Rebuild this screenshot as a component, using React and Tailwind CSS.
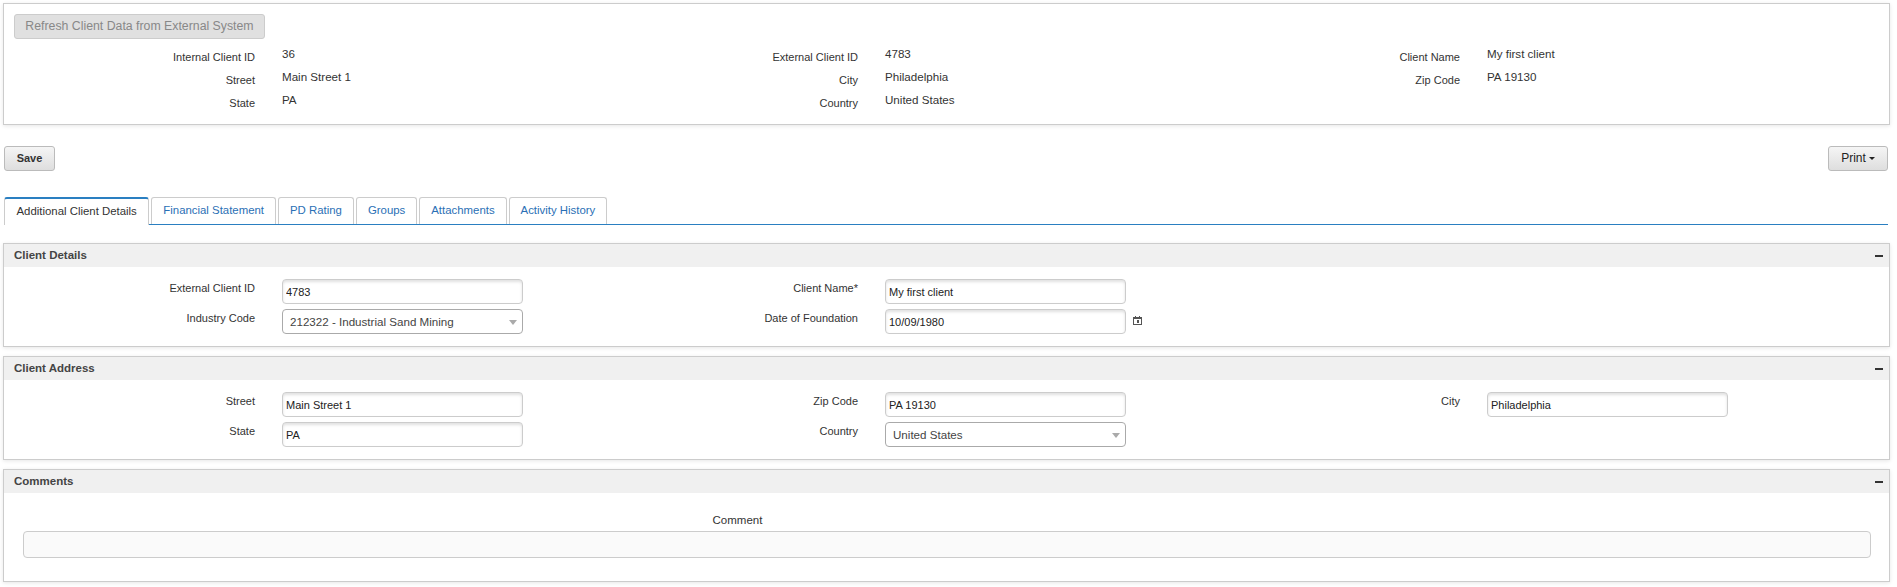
import React from "react";

const topRows = [
  [["Internal Client ID", "36"], ["External Client ID", "4783"], ["Client Name", "My first client"]],
  [["Street", "Main Street 1"], ["City", "Philadelphia"], ["Zip Code", "PA 19130"]],
  [["State", "PA"], ["Country", "United States"]],
];

const tabs = ["Financial Statement", "PD Rating", "Groups", "Attachments", "Activity History"];

const TextField = ({ value }) => (
  <input
    readOnly
    value={value}
    className="w-[241px] h-[25px] bg-white border border-[#ccc] rounded-[4px] pl-[3px] text-[11px] text-[#222] shadow-[inset_0_2px_3px_rgba(0,0,0,0.12)] outline-none"
  />
);

const SelectField = ({ value }) => (
  <div className="relative w-[241px] h-[25px] bg-white border border-[#aaa] rounded-[4px] pl-[7px] flex items-center text-[11.6px] text-[#444]">
    {value}
    <span className="absolute right-[5px] top-[10px] w-0 h-0 border-x-[4px] border-x-transparent border-t-[5px] border-t-[#aaa]" />
  </div>
);

const CalendarIcon = () => (
  <svg width="9" height="9" viewBox="0 0 9 9" className="ml-[7px] -mt-[2px]">
    <rect x="0.5" y="1.5" width="8" height="7" fill="none" stroke="#555" />
    <rect x="0" y="1" width="9" height="2" fill="#555" />
    <rect x="2" y="0" width="1" height="2" fill="#555" />
    <rect x="6" y="0" width="1" height="2" fill="#555" />
    <rect x="4" y="4" width="2" height="3" fill="#555" />
  </svg>
);

const FormCell = ({ label, children }) => (
  <div className="flex items-start">
    <label className="w-[251px] text-right pt-[2px] text-[11px] leading-[14px] text-[#333]">{label}</label>
    <div className="ml-[27px] flex items-center">{children}</div>
  </div>
);

const Section = ({ title, className, children }) => (
  <section className={`mx-[3px] w-[1887px] border border-[#ccc] shadow-[0_1px_4px_rgba(0,0,0,0.1)] ${className}`}>
    <div className="h-[23px] bg-[#f0f0f0] flex items-center justify-between pl-[10px] pr-[6px] text-[11.5px] font-bold text-[#444]">
      <span>{title}</span>
      <span className="w-[8px] h-[2px] bg-[#333]" />
    </div>
    {children}
  </section>
);

export default function App() {
  return (
    <div className="w-[1897px] h-[587px] overflow-hidden bg-white text-[#333] font-['Liberation_Sans',Arial,sans-serif]">
      {/* Client summary */}
      <div className="mx-[3px] mt-[3px] w-[1887px] h-[122px] border border-[#ccc] shadow-[0_1px_4px_rgba(0,0,0,0.1)] pt-[9px]">
        <button
          disabled
          className="ml-[10px] w-[251px] h-[25px] pb-[1px] bg-[#e0e0e0] border border-[#ccc] rounded-[3px] text-[12.3px] text-[#888]"
        >
          Refresh Client Data from External System
        </button>
        <div className="mt-[6px] grid grid-cols-[603px_602px_1fr] auto-rows-[23px]">
          {topRows.flat().map(([label, value]) => (
            <div key={label} className="flex items-start">
              <span className="w-[251px] text-right pt-[5px] text-[11px] leading-[14px] text-[#333]">{label}</span>
              <span className="ml-[27px] pt-[2px] text-[11.6px] leading-[14px] text-[#333]">{value}</span>
            </div>
          ))}
        </div>
      </div>

      {/* Actions */}
      <div className="mt-[21px] mx-[4px] w-[1885px] flex justify-between">
        <button className="w-[51px] h-[25px] pb-[1px] border border-[#bbb] rounded-[3px] bg-gradient-to-b from-[#f5f5f5] to-[#dedede] text-[11px] font-bold text-[#333]">
          Save
        </button>
        <button className="w-[60px] h-[25px] mr-[1px] pb-[1px] border border-[#bbb] rounded-[3px] bg-gradient-to-b from-[#f5f5f5] to-[#dedede] text-[12px] text-[#222] flex items-center justify-center">
          Print
          <span className="ml-[3px] mt-[1px] w-0 h-0 border-x-[3px] border-x-transparent border-t-[3px] border-t-[#222]" />
        </button>
      </div>

      {/* Tabs */}
      <div className="mt-[26px] ml-[4px] w-[1884px] h-[28px] flex items-end gap-[2px] border-b border-[#2a7fc1]">
        <div className="h-[28px] -mb-[1px] px-[11.5px] flex items-center bg-white border-x border-[#ccc] border-t-2 border-t-[#2a7fc1] rounded-t-[3px] text-[11.4px] text-[#333]">
          Additional Client Details
        </div>
        {tabs.map((tab) => (
          <div
            key={tab}
            className="h-[27px] px-[11px] flex items-center border-x border-t border-[#ccc] rounded-t-[3px] text-[11.4px] text-[#2a6fb5]"
          >
            {tab}
          </div>
        ))}
      </div>

      <Section title="Client Details" className="mt-[18px] h-[104px]">
        <div className="pt-[12px] grid grid-cols-[603px_602px_1fr] gap-y-[5px]">
          <FormCell label="External Client ID"><TextField value="4783" /></FormCell>
          <FormCell label="Client Name*"><TextField value="My first client" /></FormCell>
          <div />
          <FormCell label="Industry Code"><SelectField value="212322 - Industrial Sand Mining" /></FormCell>
          <FormCell label="Date of Foundation">
            <TextField value="10/09/1980" />
            <CalendarIcon />
          </FormCell>
        </div>
      </Section>

      <Section title="Client Address" className="mt-[9px] h-[104px]">
        <div className="pt-[12px] grid grid-cols-[603px_602px_1fr] gap-y-[5px]">
          <FormCell label="Street"><TextField value="Main Street 1" /></FormCell>
          <FormCell label="Zip Code"><TextField value="PA 19130" /></FormCell>
          <FormCell label="City"><TextField value="Philadelphia" /></FormCell>
          <FormCell label="State"><TextField value="PA" /></FormCell>
          <FormCell label="Country"><SelectField value="United States" /></FormCell>
        </div>
      </Section>

      <Section title="Comments" className="mt-[9px] h-[113px]">
        <div className="pt-[20px] px-[19px]">
          <div className="text-center text-[11.5px] leading-[14px] text-[#333] -ml-[418px]">Comment</div>
          <div className="mt-[4px] w-[1848px] h-[27px] border border-[#ccc] rounded-[4px] bg-[#fafafa]" />
        </div>
      </Section>
    </div>
  );
}
